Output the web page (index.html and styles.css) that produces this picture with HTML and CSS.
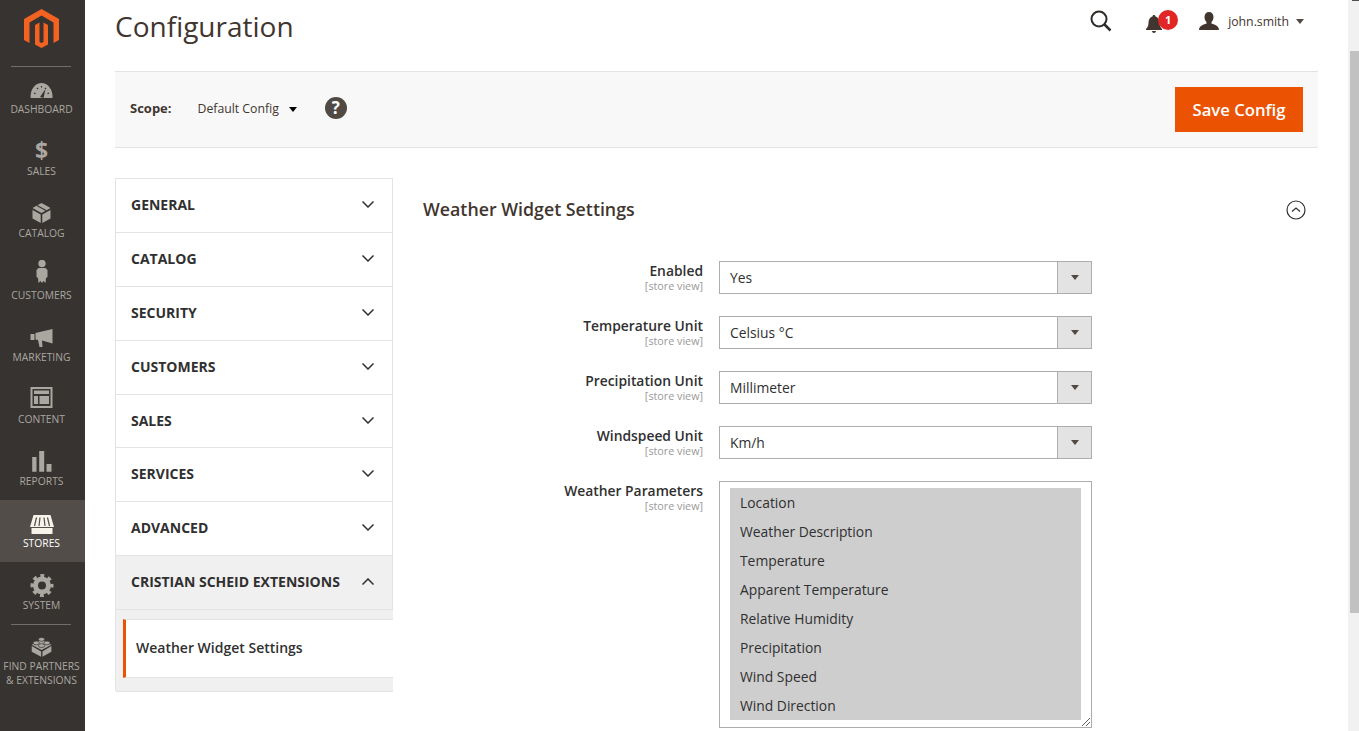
FILE: index.html
```html
<!DOCTYPE html>
<html lang="en">
<head>
    <meta charset="UTF-8">
    <meta name="viewport" content="width=device-width, initial-scale=1.0">
    <title>Configuration</title>
    <link rel="stylesheet" href="styles.css">
</head>
<body>
    <div class="app">
        <nav class="menu">
            <div class="menu-logo">
                <svg width="35" height="39" viewBox="0 0 35 39">
                    <path fill="#f26322" d="M17.5 0 0 10v21l5.5 3V13.5l12-7 12 7V34l5.5-3V10z"/>
                    <path fill="#f26322" d="M17.5 39 11 35.5V16l4.5-2.5V33l2 1 2-1V13.500l4.500 2.500v19.500z"/>
                </svg>
            </div>
            <a class="menu-item">
                <svg class="menu-icon" viewBox="0 0 24 28">
                    <path d="M.6 24C0 15 5.500 9 11.500 9s11.500 6 11 15z"/>
                    <path class="cut" d="M10 23l5.500-8 -2 9z"/>
                    <path class="cut-line" d="M4 19l1.500.6M7 14l1 1M11.500 12v1.500M16 14l-1 1M19 19l-1.500.6"/>
                </svg>
                <span>DASHBOARD</span>
            </a>
            <a class="menu-item">
                <span class="menu-icon dollar">$</span>
                <span>SALES</span>
            </a>
            <a class="menu-item">
                <svg class="menu-icon" viewBox="0 0 24 28">
                    <path d="M11.500 5l9 5-9 5-9-5zM2.500 12l8.200 4.500V25l-8.200-4.500zM12.300 16.500l8.200-4.500v8.500L12.300 25z"/>
                    <path class="cut-line" d="M7 7.500l9 5"/>
                </svg>
                <span>CATALOG</span>
            </a>
            <a class="menu-item">
                <svg class="menu-icon" viewBox="0 0 24 28">
                    <circle cx="12" cy="3.500" r="3.700"/>
                    <path d="M8.500 8h7l2 2v7l-1.500 1-.5 5-2-2-1.500 2-1.500-2-2 2-.5-5-1.500-1v-7z"/>
                </svg>
                <span>CUSTOMERS</span>
            </a>
            <a class="menu-item">
                <svg class="menu-icon" viewBox="0 0 24 28">
                    <path d="M.5 12h4v6h-4zM5.500 11l17-4v14.500L12 18.500l.5 6.500h-3L8 18l-2.500-.5z"/>
                </svg>
                <span>MARKETING</span>
            </a>
            <a class="menu-item">
                <svg class="menu-icon" viewBox="0 0 24 28">
                    <path d="M.5 3h22v21H.5zM2.500 5v17h18V5z" fill-rule="evenodd"/>
                    <path d="M4 6.500h15V10H4zM4 12h4v8H4zM9.500 12H19v8H9.500z"/>
                </svg>
                <span>CONTENT</span>
            </a>
            <a class="menu-item">
                <svg class="menu-icon" viewBox="0 0 24 28">
                    <path d="M2.200 11h4.300v14.700H2.200zM9.200 5h5v20.700h-5zM16.500 18h5v7.700h-5z"/>
                </svg>
                <span>REPORTS</span>
            </a>
            <a class="menu-item active">
                <svg class="menu-icon" viewBox="0 0 24 28">
                    <path d="M3.500 7h17L24 19H0z"/>
                    <path d="M1.500 20h21v6h-21z"/>
                    <path class="cut-line" d="M6.500 9.500 4.500 18M10 9.500 9 18M14 9.500l1 8.500M17.500 9.500l2 8.500"/>
                </svg>
                <span>STORES</span>
            </a>
            <a class="menu-item">
                <svg class="menu-icon" viewBox="0 0 24 28">
                    <circle class="ring" cx="12" cy="15.500" r="6.500" stroke-width="5"/>
                    <circle class="ring" cx="12" cy="15.500" r="9.500" stroke-width="4" stroke-dasharray="3.730 3.730" stroke-dashoffset="1.870"/>
                </svg>
                <span>SYSTEM</span>
            </a>
            <a class="menu-item partners">
                <svg class="menu-icon" viewBox="0 0 24 28">
                    <path d="M.5 13.500l10.500 6v6l-10.500-5.500zM12.500 19.500l10-6V20l-10 5.500zM11.500 6l11 6-11 6-11-6z"/>
                    <g class="stud">
                        <ellipse cx="11.500" cy="6" rx="3.500" ry="2.200"/>
                        <ellipse cx="5.500" cy="10" rx="3.500" ry="2.200"/>
                        <ellipse cx="17.500" cy="10" rx="3.500" ry="2.200"/>
                        <ellipse cx="11.500" cy="13" rx="3.500" ry="2.200"/>
                    </g>
                </svg>
                <span>FIND PARTNERS<br>&amp; EXTENSIONS</span>
            </a>
        </nav>

        <main class="main">
            <header class="page-header">
                <h1>Configuration</h1>
                <div class="actions">
                    <svg class="search-icon" width="22" height="22" viewBox="0 0 22 22">
                        <circle cx="9" cy="9" r="7.500"/>
                        <path d="M14.500 14.500 20.500 20.500"/>
                    </svg>
                    <div class="bell">
                        <svg width="17" height="19" viewBox="0 0 17 19">
                            <path d="M8 0c1 0 1.500.7 1.500 1.500C12 2.300 13.500 4.500 13.500 7.500c0 3.500 1 5 2.500 6.500v1H0v-1c1.500-1.500 2.500-3 2.500-6.500 0-3 1.500-5.200 4-6C6.500.7 7 0 8 0zM6 16h4c0 1.200-.9 2-2 2s-2-.8-2-2z"/>
                        </svg>
                        <span class="badge">1</span>
                    </div>
                    <div class="user">
                        <svg width="20" height="18" viewBox="0 0 20 18">
                            <path d="M10 0c2.800 0 4.500 2 4.500 5 0 2.200-.8 4-2 5v1.500c2.500 1 7.500 2 7.500 6.500H0c0-4.500 5-5.500 7.500-6.500V10c-1.200-1-2-2.800-2-5 0-3 1.700-5 4.500-5z"/>
                        </svg>
                        <span>john.smith</span>
                        <i class="caret"></i>
                    </div>
                </div>
            </header>

            <section class="scope-bar">
                <div class="scope">
                    <b>Scope:</b>
                    <span class="scope-value">Default Config</span>
                    <i class="caret black"></i>
                    <span class="help">?</span>
                </div>
                <button class="save">Save Config</button>
            </section>

            <div class="columns">
                <aside class="tabs">
                    <div class="tab">GENERAL<svg class="chev" viewBox="0 0 12 7"><path d="M.5.5 6 6l5.500-5.500"/></svg></div>
                    <div class="tab">CATALOG<svg class="chev" viewBox="0 0 12 7"><path d="M.5.5 6 6l5.500-5.500"/></svg></div>
                    <div class="tab">SECURITY<svg class="chev" viewBox="0 0 12 7"><path d="M.5.5 6 6l5.500-5.500"/></svg></div>
                    <div class="tab">CUSTOMERS<svg class="chev" viewBox="0 0 12 7"><path d="M.5.5 6 6l5.500-5.500"/></svg></div>
                    <div class="tab">SALES<svg class="chev" viewBox="0 0 12 7"><path d="M.5.5 6 6l5.500-5.500"/></svg></div>
                    <div class="tab">SERVICES<svg class="chev" viewBox="0 0 12 7"><path d="M.5.5 6 6l5.500-5.500"/></svg></div>
                    <div class="tab">ADVANCED<svg class="chev" viewBox="0 0 12 7"><path d="M.5.5 6 6l5.500-5.500"/></svg></div>
                    <div class="tab open">CRISTIAN SCHEID EXTENSIONS<svg class="chev" viewBox="0 0 12 7"><path d="M.5 6.500 6 1l5.500 5.500"/></svg></div>
                    <div class="subtabs">
                        <div class="subtab">Weather Widget Settings</div>
                    </div>
                </aside>

                <div class="content">
                    <div class="section-head">
                        <h2>Weather Widget Settings</h2>
                        <svg class="collapse" width="20" height="20" viewBox="0 0 20 20">
                            <circle cx="10" cy="10" r="9"/>
                            <path d="M6 11.500 10 8l4 3.500"/>
                        </svg>
                    </div>
                    <div class="form">
                        <div class="row">
                            <label>Enabled<small>[store view]</small></label>
                            <div class="select"><span>Yes</span><i class="addon"><i class="caret"></i></i></div>
                        </div>
                        <div class="row">
                            <label>Temperature Unit<small>[store view]</small></label>
                            <div class="select"><span>Celsius °C</span><i class="addon"><i class="caret"></i></i></div>
                        </div>
                        <div class="row">
                            <label>Precipitation Unit<small>[store view]</small></label>
                            <div class="select"><span>Millimeter</span><i class="addon"><i class="caret"></i></i></div>
                        </div>
                        <div class="row">
                            <label>Windspeed Unit<small>[store view]</small></label>
                            <div class="select"><span>Km/h</span><i class="addon"><i class="caret"></i></i></div>
                        </div>
                        <div class="row">
                            <label>Weather Parameters<small>[store view]</small></label>
                            <div class="multi">
                                <div class="option">Location</div>
                                <div class="option">Weather Description</div>
                                <div class="option">Temperature</div>
                                <div class="option">Apparent Temperature</div>
                                <div class="option">Relative Humidity</div>
                                <div class="option">Precipitation</div>
                                <div class="option">Wind Speed</div>
                                <div class="option">Wind Direction</div>
                                <svg class="resizer" width="10" height="10" viewBox="0 0 10 10">
                                    <path d="M1 9 9 1M5 9 9 5"/>
                                </svg>
                            </div>
                        </div>
                    </div>
                </div>
            </div>
        </main>

        <div class="scrollbar">
            <div class="arrow"></div>
            <div class="thumb"></div>
        </div>
    </div>
</body>
</html>
```

FILE: styles.css
```css
* {
    box-sizing: border-box;
}

html, body {
    margin: 0;
    height: 100%;
    overflow: hidden;
}

body {
    font-family: "Open Sans", sans-serif;
    color: #303030;
    background: #fff;
}

.app {
    display: flex;
    height: 731px;
}

/* left menu */
.menu {
    flex: 0 0 85px;
    background: #373330;
    color: #aaa6a0;
}

.menu-logo {
    height: 67px;
    padding: 9px 2px 0 0;
    display: flex;
    justify-content: center;
    position: relative;
}

.menu-logo::after,
.partners::before {
    content: "";
    position: absolute;
    left: 11px;
    width: 60px;
    height: 1px;
    background: #736e6a;
}

.menu-logo::after {
    top: 66px;
}

.partners::before {
    top: -1px;
}

.menu-item {
    display: flex;
    flex-direction: column;
    align-items: center;
    height: 62px;
    padding: 8px 2px 0 0;
    font-size: 10.3px;
    line-height: 14px;
    text-align: center;
    margin-top: -1px;
    margin-bottom: 1px;
    position: relative;
    white-space: nowrap;
}

.menu-icon {
    width: 24px;
    height: 28px;
    fill: #aaa6a0;
    display: block;
}

.menu-item.active {
    background: #524d49;
    color: #fff;
}

.menu-item.active .menu-icon {
    fill: #f7f3eb;
}

.menu-item.active .cut-line {
    stroke: #524d49;
}

.cut {
    fill: #373330;
}

.cut-line {
    fill: none;
    stroke: #373330;
    stroke-width: 1.2;
}

.dollar {
    font-size: 23px;
    font-weight: 700;
    line-height: 28px;
    text-align: center;
}

.ring {
    fill: none;
    stroke: #aaa6a0;
}

.stud {
    stroke: #373330;
    stroke-width: .8;
}

.partners {
    margin-top: 0;
    padding-top: 9px;
}

/* page */
.main {
    flex: 1;
    padding: 0 30px;
    min-width: 0;
}

.page-header {
    height: 71px;
    display: flex;
    justify-content: space-between;
    align-items: flex-start;
}

h1 {
    margin: 0;
    font-size: 28px;
    font-weight: 400;
    line-height: 52px;
    color: #41362f;
}

.actions {
    display: flex;
    align-items: center;
    height: 42px;
    padding-right: 14px;
}

.search-icon {
    fill: none;
    stroke: #2f2b29;
    stroke-width: 2;
    margin-right: 34px;
}

.search-icon path {
    stroke-width: 2.500;
}

.bell {
    position: relative;
    width: 17px;
    height: 19px;
    margin-right: 36px;
    margin-top: 7px;
    fill: #41362f;
}

.bell svg {
    display: block;
}

.badge {
    position: absolute;
    left: 12px;
    top: -5px;
    width: 20px;
    height: 20px;
    border-radius: 50%;
    background: #e22626;
    color: #fff;
    font-size: 11px;
    font-weight: 700;
    line-height: 20px;
    text-align: center;
}

.user {
    display: flex;
    align-items: center;
    font-size: 12.25px;
    color: #41362f;
    fill: #41362f;
}

.user span {
    margin: 0 7px 0 9px;
}

.caret {
    display: block;
    width: 0;
    height: 0;
    border-left: 4px solid transparent;
    border-right: 4px solid transparent;
    border-top: 5px solid #514943;
}

.caret.black {
    border-top-color: #000;
    margin: 3px 28px 0 10px;
}

.scope-bar {
    height: 77px;
    background: #f8f8f8;
    border-top: 1px solid #e3e3e3;
    border-bottom: 1px solid #e3e3e3;
    padding: 15px;
    display: flex;
    justify-content: space-between;
}

.scope {
    display: flex;
    align-items: center;
    font-size: 13px;
    height: 42px;
}

.scope b {
    font-weight: 700;
    color: #41362f;
    margin-right: 26px;
}

.scope-value {
    color: #41362f;
    font-size: 12.25px;
}

.help {
    width: 22px;
    height: 22px;
    border-radius: 50%;
    background: #514943;
    color: #fff;
    font-size: 17px;
    font-weight: 700;
    line-height: 22px;
    text-align: center;
}

.save {
    width: 128px;
    height: 45px;
    border: 0;
    background: #eb5202;
    color: #fff;
    font-family: inherit;
    font-size: 16.7px;
    font-weight: 600;
    padding: 0;
}

.columns {
    display: flex;
    gap: 30px;
    margin-top: 30px;
}

/* config tabs */
.tabs {
    flex: 0 0 278px;
    height: 513px;
    border: 1px solid #e3e3e3;
    border-bottom: 0;
    font-size: 14px;
    display: flex;
    flex-direction: column;
}

.tab {
    flex: 0 0 53.875px;
    margin-top: 0;
    padding: 0 18px 1.750px 15px;
    display: flex;
    align-items: center;
    justify-content: space-between;
    border-bottom: 1px solid #e3e3e3;
    font-weight: 700;
    color: #303030;
}

.tab.open {
    background: #f0f0f0;
}

.chev {
    width: 12px;
    height: 7px;
    fill: none;
    stroke: #303030;
    stroke-width: 1.500;
}

.subtabs {
    flex: 1;
    background: #f0f0f0;
    border-bottom: 1px solid #e3e3e3;
    padding: 9px 0 13px 7px;
    margin-right: -1px;
}

.subtab {
    height: 59px;
    background: #fff;
    border-top: 1px solid #e3e3e3;
    border-bottom: 1px solid #e3e3e3;
    border-left: 3px solid #eb5202;
    padding-left: 10px;
    font-weight: 600;
    line-height: 55px;
}

/* form */
.content {
    flex: 1;
    min-width: 0;
}

.section-head {
    height: 62px;
    display: flex;
    align-items: center;
    justify-content: space-between;
    padding-right: 12px;
    margin-bottom: 21px;
}

h2 {
    margin: 0 0 1px;
    font-size: 17.8px;
    font-weight: 600;
    color: #41362f;
}

.collapse {
    fill: none;
    stroke: #303030;
    stroke-width: 1.200;
    margin-top: 2px;
}

.form {
    display: flex;
    flex-direction: column;
    gap: 22px;
}

.row {
    display: grid;
    grid-template-columns: 280px 373px;
    gap: 16px;
}

label {
    text-align: right;
    font-size: 13.85px;
    font-weight: 600;
    line-height: 20px;
    padding-top: 0;
}

label small {
    display: block;
    font-size: 10.75px;
    font-weight: 400;
    line-height: 10px;
    color: #999;
}

.select {
    height: 33px;
    border: 1px solid #adadad;
    display: flex;
    justify-content: space-between;
    font-size: 13.85px;
    line-height: 31px;
    padding-left: 10px;
}

.addon {
    width: 34px;
    background: #e3e3e3;
    border-left: 1px solid #adadad;
    display: flex;
    align-items: center;
    justify-content: center;
}

.multi {
    height: 247px;
    border: 1px solid #adadad;
    padding: 6px 10px;
    position: relative;
    font-size: 13.85px;
}

.option {
    height: 29px;
    line-height: 29px;
    background: #cecece;
    padding-left: 10px;
}

.resizer {
    position: absolute;
    right: 0;
    bottom: 0;
    fill: none;
    stroke: #666;
    stroke-width: 1;
}

/* fake scrollbar, the shot is scrolled down a bit */
.scrollbar {
    flex: 0 0 11px;
    background: #f1f1f1;
    padding-left: 2px;
}

.arrow {
    height: 1px;
    margin-left: 2px;
    background: #505050;
}

.thumb {
    height: 562px;
    margin-top: 50px;
    background: #c1c1c1;
}
```
